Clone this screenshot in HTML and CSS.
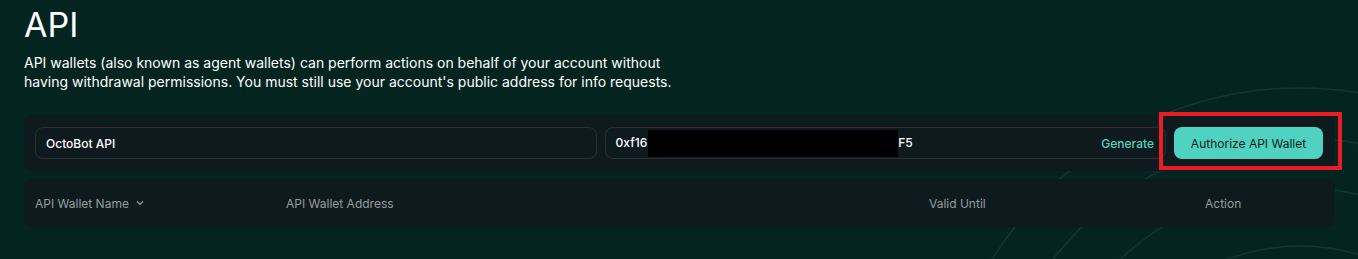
FILE: index.html
```html
<!DOCTYPE html>
<html lang="en">
  <head>
    <meta charset="UTF-8" />
    <meta name="viewport" content="width=device-width, initial-scale=1.0" />
    <title>API</title>
    <link rel="stylesheet" href="styles.css">
  </head>

  <body>
    <div class="bg-arcs">
      <svg width="1358" height="259" viewBox="0 0 1358 259">
        <circle cx="1300" cy="450" r="362"></circle>
        <circle cx="1300" cy="450" r="312"></circle>
        <circle cx="1300" cy="450" r="262"></circle>
        <circle cx="1300" cy="450" r="204"></circle>
      </svg>
    </div>

    <main class="page">
      <h1 class="title">API</h1>
      <p class="intro">
        API wallets (also known as agent wallets) can perform actions on behalf of your account without
        having withdrawal permissions. You must still use your account's public address for info requests.
      </p>

      <section class="panel agent-form">
        <div class="field">
          <span class="field-value">OctoBot API</span>
        </div>
        <div class="field">
          <span class="field-value">0xf16<span class="redacted"></span>F5</span>
          <span class="generate">Generate</span>
        </div>
        <div class="auth-wrap">
          <button class="auth-btn">Authorize API Wallet</button>
        </div>
      </section>

      <section class="panel wallet-table">
        <span class="col sortable">
          API Wallet Name
          <svg class="chevron" width="10" height="10" viewBox="0 0 10 10">
            <path d="M2 3.5 L5 6.5 L8 3.5"></path>
          </svg>
        </span>
        <span class="col">API Wallet Address</span>
        <span class="col">Valid Until</span>
        <span class="col">Action</span>
      </section>
    </main>
  </body>
</html>
```

FILE: styles.css
```css
*,
*::before,
*::after {
  box-sizing: border-box;
}

body {
  font-family: Inter, 'Noto Sans', sans-serif;
  background: #04251f;
  color: #fff;
  margin: 0;
  width: 1358px;
  height: 259px;
  overflow: hidden;
  position: relative;
}

.bg-arcs {
  position: absolute;
  inset: 0;
  pointer-events: none;

  circle {
    fill: none;
    stroke: rgba(120, 190, 170, 0.12);
    stroke-width: 1.5;
  }
}

.page {
  position: relative;
  padding: 0 23px 0 24px;
}

.title {
  font-size: 34px;
  font-weight: 400;
  line-height: 40px;
  margin: 5px 0 0;
}

.intro {
  font-size: 14px;
  line-height: 19px;
  margin: 8px 0 0;
  max-width: 665px;
}

.panel {
  background: #0f1a1f;
  border-radius: 8px;
}

.agent-form {
  display: flex;
  align-items: center;
  gap: 8px;
  margin-top: 24px;
  padding: 12px 12px 12px 11px;
}

.field {
  flex: 1;
  height: 32px;
  display: flex;
  align-items: center;
  justify-content: space-between;
  border: 1px solid #273035;
  border-radius: 8px;
  padding: 0 11px 0 10px;
  font-size: 12px;
  font-weight: 500;

  .redacted {
    display: inline-block;
    width: 250px;
    height: 27px;
    background: #000;
    vertical-align: middle;
    margin-left: 1px;
  }

  .generate {
    color: #50d2c1;
  }
}

.auth-wrap {
  position: relative;

  &::after {
    content: '';
    position: absolute;
    top: -15px;
    left: -15px;
    right: -19px;
    bottom: -11px;
    border: 4px solid #ed1c24;
  }
}

.auth-btn {
  width: 149px;
  height: 32px;
  border: 0;
  border-radius: 8px;
  background: #50d2c1;
  color: #0f1a1f;
  font-family: inherit;
  font-size: 12px;
  font-weight: 400;
  cursor: pointer;
}

.wallet-table {
  display: grid;
  grid-template-columns: 251px 643px 276px 1fr;
  align-items: center;
  height: 48px;
  margin-top: 8px;
  padding: 0 12px 0 11px;
  font-size: 12px;
  color: #949e9c;

  .sortable {
    display: flex;
    align-items: center;
    gap: 6px;
  }

  .chevron path {
    fill: none;
    stroke: #949e9c;
    stroke-width: 1.2;
  }
}
```
